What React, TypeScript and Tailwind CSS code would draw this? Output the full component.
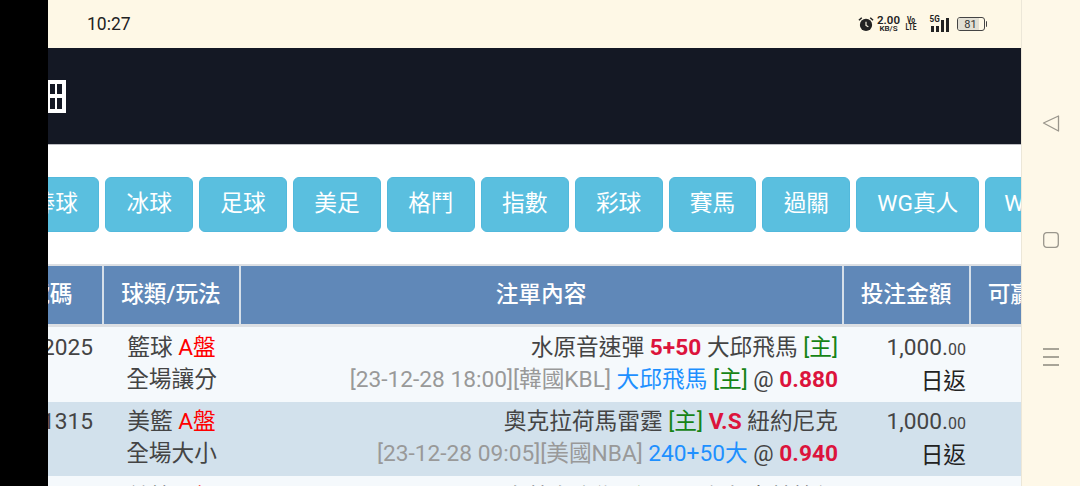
const sports = [
  { label: '棒球', width: 'w-[87.9px]' },
  { label: '冰球', width: 'w-[87.9px]' },
  { label: '足球', width: 'w-[87.9px]' },
  { label: '美足', width: 'w-[87.9px]' },
  { label: '格鬥', width: 'w-[87.9px]' },
  { label: '指數', width: 'w-[87.9px]' },
  { label: '彩球', width: 'w-[87.9px]' },
  { label: '賽馬', width: 'w-[87.9px]' },
  { label: '過關', width: 'w-[87.9px]' },
  { label: 'WG真人', width: 'w-[123px]' },
  { label: 'WM真人', width: 'w-[123px]' },
];

function StatusIcons() {
  return (
    <div className="flex items-center text-[#222]">
      <svg width="16" height="16" viewBox="0 0 17 17" className="mr-[3px]">
        <circle cx="8.5" cy="9.5" r="6.5" fill="#222" />
        <path d="M1 4.5 4 1.8M16 4.5 13 1.8" stroke="#222" strokeWidth="1.6" fill="none" />
        <path d="M8.5 6v4l2.5 1.5" stroke="#fef8e6" strokeWidth="1.2" fill="none" />
      </svg>
      <div className="flex w-[24px] flex-col items-center font-semibold leading-none">
        <span className="text-[11.5px] leading-[10px]">2.00</span>
        <span className="text-[8px] leading-[8px]">KB/S</span>
      </div>
      <div className="ml-[2px] flex w-[16px] scale-x-75 flex-col items-center text-[9px] font-bold leading-[7.5px]">
        <span>Vo</span>
        <span>LTE</span>
      </div>
      <div className="relative ml-[11px] flex h-[16px] items-end gap-[2px] pl-[1px]">
        <span className="absolute -top-[1px] -left-[1px] scale-x-90 text-[9px] font-bold leading-[9px]">5G</span>
        <span className="h-[6px] w-[3px] bg-[#222]" />
        <span className="h-[6px] w-[3px] bg-[#222]" />
        <span className="h-[12px] w-[3px] bg-[#222]" />
        <span className="h-[14px] w-[3px] bg-[#222]" />
      </div>
      <div className="ml-[8px] flex items-center">
        <div className="relative flex h-[14px] w-[28px] items-center justify-center overflow-hidden rounded-[3px] border border-[#444] text-[11px] leading-none text-[#333]">
          <span className="absolute inset-y-0 left-0 w-[81%] bg-[#e2dfd4]" />
          <span className="relative">81</span>
        </div>
        <span className="ml-[1px] h-[6px] w-[1.5px] rounded-r bg-[#444]" />
      </div>
    </div>
  );
}

function NavPanel() {
  return (
    <div className="flex w-[59px] shrink-0 flex-col items-center border-l border-[#ece7d8] bg-[#fef8e8] pt-[114px] pr-[1px]">
      <svg width="18" height="18" viewBox="0 0 18 18" fill="none" stroke="#9a968c" strokeWidth="1.3" strokeLinejoin="round">
        <path d="M1.5 9 16.5 2v15z" />
      </svg>
      <svg width="16" height="16" viewBox="0 0 16 16" fill="none" stroke="#9a968c" strokeWidth="1.3" className="mt-[100px]">
        <rect x="0.7" y="0.7" width="14.6" height="14.6" rx="3" />
      </svg>
      <div className="mt-[100px] flex w-[16px] flex-col gap-[6.5px]">
        <span className="h-[1.5px] bg-[#a8a498]" />
        <span className="h-[1.5px] bg-[#a8a498]" />
        <span className="h-[1.5px] bg-[#a8a498]" />
      </div>
    </div>
  );
}

function HeadCell({ label, className }: { label: string; className: string }) {
  return (
    <div className={`flex h-[58px] shrink-0 items-center justify-center border-r-2 border-[#d5dfe9] text-[22.7px] font-medium ${className}`}>
      {label}
    </div>
  );
}

type Row = {
  bg: string;
  pad: string;
  no: string;
  sport: string;
  play: string;
  first: React.ReactNode;
  second: React.ReactNode;
  pay: string;
};

const Main = ({ children }: { children: React.ReactNode }) => <span className="text-[#444]">{children}</span>;
const Crimson = ({ children }: { children: React.ReactNode }) => <b className="font-bold text-[#dc143c]">{children}</b>;
const Green = ({ children }: { children: React.ReactNode }) => <span className="text-[#158415]">{children}</span>;
const Blue = ({ children }: { children: React.ReactNode }) => <span className="text-[#1e90ff]">{children}</span>;

const rows: Row[] = [
  {
    bg: 'bg-[#f5f9fc]',
    pad: 'h-[75px] pt-[5px]',
    no: '2025',
    sport: '籃球',
    play: '全場讓分',
    first: (
      <>
        <Main>水原音速彈</Main> <Crimson>5+50</Crimson> <Main>大邱飛馬</Main> <Green>[主]</Green>
      </>
    ),
    second: (
      <>
        <span className="text-[#999]">[23-12-28 18:00][韓國KBL]</span> <Blue>大邱飛馬</Blue> <Green>[主]</Green>{' '}
        <Main>@</Main> <Crimson>0.880</Crimson>
      </>
    ),
    pay: '日返',
  },
  {
    bg: 'bg-[#d2e1ec]',
    pad: 'h-[74px] pt-[4px]',
    no: '1315',
    sport: '美籃',
    play: '全場大小',
    first: (
      <>
        <Main>奧克拉荷馬雷霆</Main> <Green>[主]</Green> <Crimson>V.S</Crimson> <Main>紐約尼克</Main>
      </>
    ),
    second: (
      <>
        <span className="text-[#999]">[23-12-28 09:05][美國NBA]</span> <Blue>240+50大</Blue> <Main>@</Main>{' '}
        <Crimson>0.940</Crimson>
      </>
    ),
    pay: '日返',
  },
  {
    bg: 'bg-[#f5f9fc]',
    pad: 'h-[74px] pt-[6px]',
    no: '1320',
    sport: '美籃',
    play: '全場讓分',
    first: (
      <>
        <Main>奧蘭多魔術</Main> <Green>[主]</Green> <Crimson>V.S</Crimson> <Main>布魯克林籃網</Main>
      </>
    ),
    second: <span className="text-[#999]">[23-12-28 09:05][美國NBA]</span>,
    pay: '日返',
  },
];

export default function App() {
  return (
    <div className="flex h-[486px] w-[1080px] overflow-hidden bg-black font-['Roboto','Noto_Sans_CJK_TC',sans-serif]">
      <div className="w-[48px] shrink-0 bg-black" />

      <div className="flex w-[973px] shrink-0 flex-col overflow-hidden bg-white">
        <div className="flex h-[48px] shrink-0 items-center justify-between bg-[#fef8e6] pl-[39px] pr-[34px]">
          <span className="text-[17.5px] text-[#222]">10:27</span>
          <StatusIcons />
        </div>

        <div className="flex h-[97px] shrink-0 items-center border-b border-[#bdbdc2] bg-[#141824]">
          <svg width="18" height="33" viewBox="0 0 18 33" fill="#fff">
            <path fillRule="evenodd" d="M0 0h18v33H0zM2 4v10h5V4zM9 4v10h5V4zM2 18v11h5V18zM9 18v11h5V18z" />
          </svg>
        </div>

        <div className="-ml-[36.7px] flex h-[119px] shrink-0 gap-[6px] pt-[32px]">
          {sports.map((s) => (
            <div
              key={s.label}
              className={`flex h-[55px] shrink-0 items-center justify-center rounded-[6px] border border-[#52b9dc] bg-[#5abfdf] text-[22.7px] text-white ${s.width}`}
            >
              {s.label}
            </div>
          ))}
        </div>

        <div className="flex shrink-0 flex-col border-t-[2px] border-b-[3px] border-[#dcdfe3] bg-[#6088b8] text-white">
          <div className="-ml-[50px] flex">
            <HeadCell label="號碼" className="w-[105.5px]" />
            <HeadCell label="球類/玩法" className="w-[137px]" />
            <HeadCell label="注單內容" className="w-[603px]" />
            <HeadCell label="投注金額" className="w-[127px]" />
            <HeadCell label="可贏金額" className="w-[127px]" />
          </div>
        </div>

        {rows.map((r) => (
          <div key={r.no} className={`flex shrink-0 text-[22.7px] leading-[32px] ${r.bg} ${r.pad}`}>
            <div className="-ml-[20px] w-[74px] shrink-0 pr-[9px] text-right text-[#444] whitespace-nowrap">{r.no}</div>
            <div className="ml-[1px] flex w-[137px] shrink-0 flex-col items-center text-[#444]">
              <span>
                {r.sport} <span className="text-[#ff0000]">A盤</span>
              </span>
              <span>{r.play}</span>
            </div>
            <div className="flex w-[598px] shrink-0 flex-col items-end whitespace-nowrap">
              <span>{r.first}</span>
              <span>{r.second}</span>
            </div>
            <div className="flex w-[128px] shrink-0 flex-col items-end">
              <span className="text-[#444]">
                1,000.<span className="text-[16px]">00</span>
              </span>
              <span className="text-[#222]">{r.pay}</span>
            </div>
          </div>
        ))}
      </div>

      <NavPanel />
    </div>
  );
}
